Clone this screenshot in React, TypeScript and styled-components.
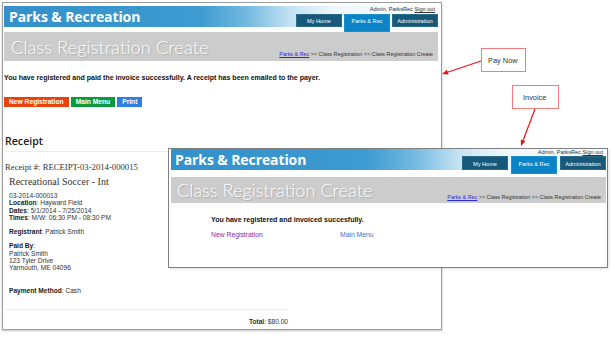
import React from 'react';
import styled, { createGlobalStyle, css } from 'styled-components';

const GlobalStyle = createGlobalStyle`
  html, body {
    margin: 0;
    padding: 0;
    background: #ffffff;
  }
  body {
    font-family: 'Liberation Sans', Arial, sans-serif;
    color: #222222;
  }
`;

const Canvas = styled.div`
  position: relative;
  box-sizing: border-box;
  width: 611px;
  height: 337px;
  padding: 2px;
  overflow: hidden;
`;

const Window = styled.div<{ $inset?: boolean }>`
  box-sizing: border-box;
  width: 440px;
  display: flex;
  flex-direction: column;
  background: #ffffff;
  border: 1px solid #9c9c9c;
  ${(p) =>
    p.$inset
      ? css`
          position: absolute;
          left: 168px;
          top: 148px;
          height: 120px;
          padding: 0 1px 0 2px;
          border-color: #808080;
          box-shadow: 1px 1px 2px rgba(0, 0, 0, 0.12);
        `
      : css`
          height: 328px;
          padding: 2px 3px 0 1px;
          box-shadow: 0 1px 2px rgba(0, 0, 0, 0.25);
        `}
`;

const Banner = styled.header<{ $compact?: boolean }>`
  display: flex;
  justify-content: space-between;
  height: 21px;
  margin-top: ${(p) => (p.$compact ? '0' : '1px')};
  background: linear-gradient(
    to right,
    #3490c9 0%,
    #3d9bd1 45%,
    #74b9e0 56%,
    #c4e2f3 66%,
    #eef7fc 76%,
    #f7fbfd 100%
  );
`;

const BrandName = styled.div<{ $compact?: boolean }>`
  font-family: 'Open Sans', 'Noto Sans', sans-serif;
  font-weight: 700;
  font-size: 14px;
  line-height: 21px;
  color: #ffffff;
  padding-left: ${(p) => (p.$compact ? '4px' : '5px')};
  letter-spacing: -0.1px;
`;

const UserArea = styled.div`
  display: flex;
  flex-direction: column;
  align-items: flex-end;
`;

const UserLine = styled.div<{ $compact?: boolean }>`
  height: ${(p) => (p.$compact ? '7px' : '8px')};
  font-size: 5.6px;
  line-height: 7px;
  color: #333333;
  padding-right: 3px;

  a {
    color: #333333;
    text-decoration: underline;
  }
`;

const Tabs = styled.nav<{ $compact?: boolean }>`
  display: flex;
  align-items: flex-start;
  gap: ${(p) => (p.$compact ? '3px' : '2px')};
  height: ${(p) => (p.$compact ? '14px' : '13px')};
`;

const Tab = styled.div<{ $active?: boolean; $compact?: boolean }>`
  box-sizing: border-box;
  width: 46px;
  height: ${(p) => (p.$active ? 18 : p.$compact ? 14 : 13)}px;
  padding-top: ${(p) => (p.$compact ? '4px' : '3px')};
  text-align: center;
  font-size: 5.6px;
  line-height: 7px;
  color: #ffffff;
  background: ${(p) => (p.$active ? '#0a84c6' : '#17597a')};
  border: 1px solid ${(p) => (p.$active ? '#1c8fcd' : '#2b6c8b')};
  position: relative;
  z-index: 1;
`;

const TitleBar = styled.div<{ $compact?: boolean }>`
  display: flex;
  justify-content: space-between;
  margin-top: ${(p) => (p.$compact ? '7px' : '5px')};
  height: ${(p) => (p.$compact ? '26px' : '29px')};
  padding: 0 5px 0 ${(p) => (p.$compact ? '6px' : '7px')};
  background: #cccccc;
`;

const PageTitle = styled.h1<{ $compact?: boolean }>`
  margin: 0;
  align-self: center;
  font-family: Lato, 'Open Sans', sans-serif;
  font-weight: 300;
  font-size: ${(p) => (p.$compact ? '18.2px' : '18.4px')};
  color: #ffffff;
  text-shadow: 1px 1px 1px rgba(0, 0, 0, 0.18);
  white-space: nowrap;
`;

const Breadcrumb = styled.div<{ $compact?: boolean }>`
  align-self: flex-end;
  margin-bottom: ${(p) => (p.$compact ? '3px' : '4px')};
  font-size: 5.4px;
  line-height: 6px;
  color: #333333;
  white-space: nowrap;

  a {
    color: #2a2adb;
    text-decoration: underline;
  }
`;

const Notice = styled.p<{ $inset?: boolean }>`
  margin: ${(p) => (p.$inset ? '13px 0 0 40px' : '13px 0 0 0')};
  font-weight: 700;
  font-size: 7px;
  line-height: 8px;
  color: #111111;
  white-space: nowrap;
`;

const ButtonRow = styled.div`
  display: flex;
  gap: 2px;
  margin-top: 15px;
`;

const tones = {
  red: '#ea420c',
  green: '#0b9a3e',
  blue: '#2f7fe2',
};

const ActionButton = styled.button<{ $tone: keyof typeof tones }>`
  height: 10px;
  padding: 0 5px;
  border: none;
  background: ${(p) => tones[p.$tone]};
  color: #ffffff;
  font-family: 'Liberation Sans', Arial, sans-serif;
  font-weight: 700;
  font-size: 6.7px;
  line-height: 10px;
`;

const LinkRow = styled.div`
  display: grid;
  grid-template-columns: 129px auto;
  margin: 7px 0 0 40px;
  font-size: 6.8px;
  line-height: 8px;
`;

const PlainLink = styled.a<{ $visited?: boolean }>`
  color: ${(p) => (p.$visited ? '#8a2aa0' : '#3276d4')};
  text-decoration: none;
`;

const ReceiptSection = styled.section`
  flex: 1;
  display: flex;
  flex-direction: column;
  width: 283px;
  margin-left: 1px;
`;

const ReceiptHeading = styled.h2`
  margin: 27px 0 0;
  padding-bottom: 3px;
  border-bottom: 1px solid #ececec;
  font-family: 'Open Sans', 'Noto Sans', sans-serif;
  font-weight: 600;
  font-size: 10.6px;
  line-height: 14px;
  color: #222222;
`;

const ReceiptNumber = styled.div`
  margin-top: 10px;
  font-family: 'Liberation Serif', 'Times New Roman', serif;
  font-size: 8.7px;
  line-height: 10px;
  color: #333333;
`;

const ProgramName = styled.div`
  margin: 5px 0 0 4px;
  font-family: 'Liberation Serif', 'Times New Roman', serif;
  font-size: 10px;
  line-height: 10px;
  color: #333333;
`;

const DetailBlock = styled.div<{ $gap: number }>`
  margin: ${(p) => p.$gap}px 0 0 4px;
  font-size: 6.6px;
  line-height: 7.3px;
  color: #333333;

  b {
    color: #1a1a1a;
  }
`;

const TotalRow = styled.div`
  margin-top: auto;
  margin-bottom: 3px;
  padding-top: 8px;
  border-top: 1px solid #ececec;
  text-align: right;
  font-size: 6.6px;
  line-height: 8px;
  color: #333333;
`;

const Callout = styled.div<{ $left: number; $top: number; $width: number; $pad: number }>`
  position: absolute;
  left: ${(p) => p.$left}px;
  top: ${(p) => p.$top}px;
  box-sizing: border-box;
  width: ${(p) => p.$width}px;
  height: 24px;
  display: flex;
  align-items: center;
  padding-left: ${(p) => p.$pad}px;
  border: 1.5px solid #f47c7c;
  background: #ffffff;
  font-size: 7.4px;
  color: #333333;
`;

const ArrowLayer = styled.svg`
  position: absolute;
  left: 0;
  top: 0;
  width: 611px;
  height: 337px;
  pointer-events: none;
`;

type BannerProps = { compact?: boolean };

const SiteBanner: React.FC<BannerProps> = ({ compact }) => (
  <Banner $compact={compact}>
    <BrandName $compact={compact}>Parks &amp; Recreation</BrandName>
    <UserArea>
      <UserLine $compact={compact}>
        Admin, ParksRec <a>Sign out</a>
      </UserLine>
      <Tabs $compact={compact}>
        <Tab $compact={compact}>My Home</Tab>
        <Tab $compact={compact} $active>
          Parks &amp; Rec
        </Tab>
        <Tab $compact={compact}>Administration</Tab>
      </Tabs>
    </UserArea>
  </Banner>
);

const PageTitleBar: React.FC<BannerProps> = ({ compact }) => (
  <TitleBar $compact={compact}>
    <PageTitle $compact={compact}>Class Registration Create</PageTitle>
    <Breadcrumb $compact={compact}>
      <a>Parks &amp; Rec</a> &gt;&gt; Class Registration &gt;&gt; Class Registration Create
    </Breadcrumb>
  </TitleBar>
);

export default function App() {
  return (
    <>
      <GlobalStyle />
      <Canvas>
        <Window>
          <SiteBanner />
          <PageTitleBar />
          <Notice>
            You have registered and paid the invoice successfully. A receipt has been emailed to the
            payer.
          </Notice>
          <ButtonRow>
            <ActionButton $tone="red">New Registration</ActionButton>
            <ActionButton $tone="green">Main Menu</ActionButton>
            <ActionButton $tone="blue">Print</ActionButton>
          </ButtonRow>
          <ReceiptSection>
            <ReceiptHeading>Receipt</ReceiptHeading>
            <ReceiptNumber>Receipt #: RECEIPT-03-2014-000015</ReceiptNumber>
            <ProgramName>Recreational Soccer - Int</ProgramName>
            <DetailBlock $gap={5}>
              03-2014-000013
              <br />
              <b>Location</b>: Hayward Field
              <br />
              <b>Dates</b>: 5/1/2014 - 7/25/2014
              <br />
              <b>Times</b>: M/W: 06:30 PM - 08:30 PM
            </DetailBlock>
            <DetailBlock $gap={7}>
              <b>Registrant</b>: Patrick Smith
            </DetailBlock>
            <DetailBlock $gap={7}>
              <b>Paid By</b>:
              <br />
              Patrick Smith
              <br />
              123 Tyler Drive
              <br />
              Yarmouth, ME 04096
            </DetailBlock>
            <DetailBlock $gap={15}>
              <b>Payment Method</b>: Cash
            </DetailBlock>
            <TotalRow>
              <b>Total</b>: $80.00
            </TotalRow>
          </ReceiptSection>
        </Window>

        <Window $inset>
          <SiteBanner compact />
          <PageTitleBar compact />
          <Notice $inset>You have registered and invoiced succesfully.</Notice>
          <LinkRow>
            <PlainLink $visited>New Registration</PlainLink>
            <PlainLink>Main Menu</PlainLink>
          </LinkRow>
        </Window>

        <Callout $left={481} $top={48} $width={45} $pad={6}>
          Pay Now
        </Callout>
        <Callout $left={512} $top={85} $width={47} $pad={10}>
          Invoice
        </Callout>

        <ArrowLayer viewBox="0 0 611 337">
          <line x1="481" y1="61" x2="446" y2="72.7" stroke="#e81414" strokeWidth="1.2" />
          <polygon points="442,74 448.5,74.5 446.9,69.7" fill="#e81414" />
          <line x1="535" y1="109" x2="522.5" y2="142" stroke="#e81414" strokeWidth="1.2" />
          <polygon points="521,146 525.4,141.3 520.8,139.5" fill="#e81414" />
        </ArrowLayer>
      </Canvas>
    </>
  );
}
